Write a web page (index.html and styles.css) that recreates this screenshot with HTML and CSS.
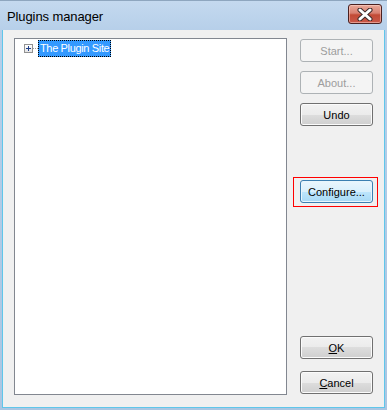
FILE: index.html
```html
<!DOCTYPE html>
<html>
<head>
<meta charset="utf-8">
<link rel="stylesheet" href="styles.css">
</head>
<body>
<div class="window">
  <div class="titlebar">
    <span class="title">Plugins manager</span>
    <div class="close">
      <svg width="16" height="13" viewBox="0 0 16 13">
        <path d="M3 2 L13 11 M13 2 L3 11" stroke="#3b2a2a" stroke-width="5" stroke-linecap="round" fill="none"/>
        <path d="M3 2 L13 11 M13 2 L3 11" stroke="#ffffff" stroke-width="3" stroke-linecap="round" fill="none"/>
      </svg>
    </div>
  </div>
  <div class="client">
    <div class="tree">
      <div class="node">
        <span class="expander"><span class="hbar"></span><span class="vbar"></span></span>
        <span class="dots"></span>
        <span class="label">The Plugin Site</span>
      </div>
    </div>
    <div class="buttons">
      <button class="btn disabled">Start...</button>
      <button class="btn disabled">About...</button>
      <button class="btn">Undo</button>
      <div class="marked"><button class="btn focus">Configure...</button></div>
      <div class="spacer"></div>
      <button class="btn"><u>O</u>K</button>
      <button class="btn"><u>C</u>ancel</button>
    </div>
  </div>
</div>
</body>
</html>
```

FILE: styles.css
```css
html, body {
  margin: 0;
  padding: 0;
}
body {
  width: 387px;
  height: 410px;
  overflow: hidden;
  font-family: "Liberation Sans", Arial, sans-serif;
}
.window {
  width: 387px;
  height: 410px;
  box-sizing: border-box;
  background: linear-gradient(#c4d9ef 0px, #b6cfe9 30px, #abc6e2 410px);
  border-top: 1px solid #8ea6bf;
  display: flex;
  flex-direction: column;
}
.titlebar {
  height: 29px;
  display: flex;
  align-items: flex-start;
  flex: none;
}
.title {
  font-size: 13px;
  color: #000;
  margin: 8px 0 0 7px;
  line-height: 15px;
  letter-spacing: -0.1px;
}
.close {
  margin: 3px 5px 0 auto;
  width: 32px;
  height: 18px;
  border: 1px solid #4a2020;
  border-radius: 3px;
  background: linear-gradient(#e9a99a 0%, #d88071 45%, #c24a35 55%, #c9584a 100%);
  box-shadow: inset 0 0 0 1px rgba(255, 220, 210, 0.5);
  display: flex;
  align-items: center;
  justify-content: center;
}
.close svg {
  display: block;
}
.client {
  flex: 1;
  margin: 0 2px 2px 2px;
  border: 1px solid #5fc6ea;
  border-top: none;
  background: #f0f0f0;
  display: flex;
  padding: 8px 11px 12px 11px;
}
.tree {
  width: 273px;
  box-sizing: border-box;
  border: 1px solid #828790;
  background: #fff;
  padding: 1px 0 0 9px;
}
.node {
  display: flex;
  align-items: center;
  height: 17px;
}
.expander {
  position: relative;
  width: 7px;
  height: 7px;
  border: 1px solid #919191;
  background: linear-gradient(#ffffff, #e4e4e4);
  flex: none;
}
.hbar {
  position: absolute;
  left: 1px;
  top: 3px;
  width: 5px;
  height: 1px;
  background: #1e3f8a;
}
.vbar {
  position: absolute;
  left: 3px;
  top: 1px;
  width: 1px;
  height: 5px;
  background: #1e3f8a;
}
.dots {
  width: 5px;
  height: 1px;
  background: repeating-linear-gradient(90deg, #a0a0a0 0 1px, transparent 1px 2px);
  flex: none;
}
.label {
  background: #3399ff;
  color: #fff;
  font-size: 11px;
  letter-spacing: -0.35px;
  line-height: 15px;
  padding: 0 1px 0 1px;
  border: 1px dotted #f0a030;
  outline: 1px dotted #000;
  outline-offset: -1px;
  white-space: nowrap;
}
.buttons {
  margin-left: 13px;
  width: 73px;
  display: flex;
  flex-direction: column;
  padding-top: 1px;
}
.btn {
  width: 73px;
  height: 23px;
  box-sizing: border-box;
  border: 1px solid #707070;
  border-radius: 3px;
  background: linear-gradient(#f2f2f2 0%, #ebebeb 50%, #dddddd 50%, #cfcfcf 100%);
  box-shadow: inset 0 0 0 1px #fbfbfb;
  font-family: "Liberation Sans", Arial, sans-serif;
  font-size: 11px;
  color: #000;
  padding: 0;
  margin: 0 0 9px 0;
  flex: none;
}
.btn u {
  text-decoration: underline;
}
.btn.disabled {
  border-color: #adb2b5;
  background: #f4f4f4;
  box-shadow: none;
  color: #9d9d9d;
}
.btn.focus {
  border-color: #3c7fb1;
  background: linear-gradient(#eaf6fd 0%, #d9f0fc 50%, #bee6fd 50%, #a7d9f5 100%);
  box-shadow: inset 0 0 0 1px #e8f6fd;
  margin: 0;
}
.marked {
  position: relative;
  margin-top: 45px;
}
.marked::after {
  content: "";
  position: absolute;
  left: -7px;
  right: -5px;
  top: -3px;
  bottom: -3px;
  border: 1px solid #ff0000;
}
.spacer {
  flex: 1;
}
.btn:last-child {
  margin-bottom: 1px;
}
.spacer + .btn {
  margin-bottom: 12px;
}
```
